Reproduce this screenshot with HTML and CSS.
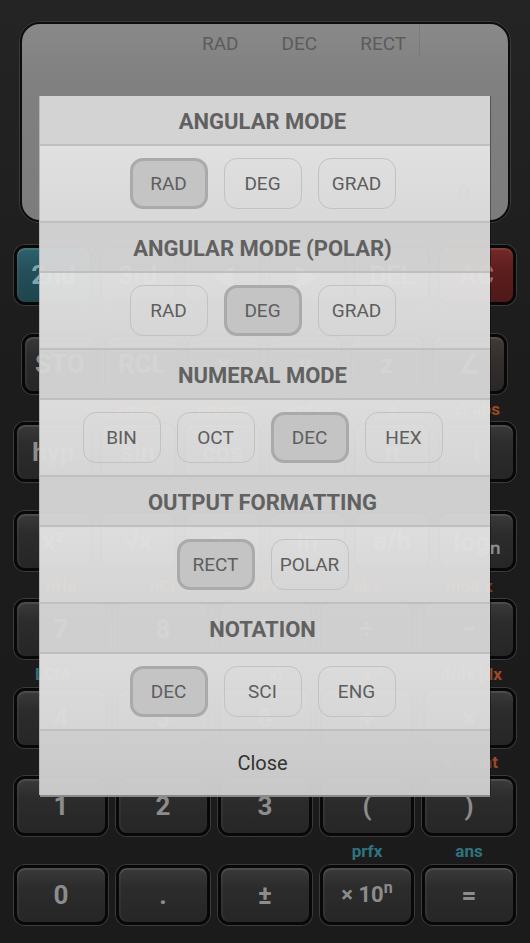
FILE: index.html
```html
<!DOCTYPE html>
<html>
<head>
<meta charset="utf-8">
<link rel="stylesheet" href="styles.css">
</head>
<body>
<div class="calc">
  <div class="display">
    <div class="status">
      <span>RAD</span><span>DEC</span><span>RECT</span><span class="sep"></span>
    </div>
    <div class="result">0</div>
  </div>
  <div class="keypad">
    <div class="row six">
      <div class="key teal">2nd</div><div class="key">3rd</div><div class="key">◀</div><div class="key">▶</div><div class="key">DEL</div><div class="key red">AC</div>
    </div>
    <div class="labels six"><span></span><span></span><span></span><span></span><span></span><span></span></div>
    <div class="row six narrow">
      <div class="key">STO</div><div class="key">RCL</div><div class="key">x</div><div class="key">y</div><div class="key">z</div><div class="key brown">∠</div>
    </div>
    <div class="labels six"><span></span><span class="or">arcsin</span><span class="or">arccos</span><span class="or">arctan</span><span class="or">e</span><span class="or">∠ abs</span></div>
    <div class="row six">
      <div class="key">hyp</div><div class="key">sin</div><div class="key">cos</div><div class="key">tan</div><div class="key">π</div><div class="key">i</div>
    </div>
    <div class="labels six"><span></span><span></span><span></span><span></span><span></span><span></span></div>
    <div class="row six">
      <div class="key">x²</div><div class="key">√x</div><div class="key">xⁿ</div><div class="key">ln</div><div class="key">a/b</div><div class="key">logₙ</div>
    </div>
    <div class="labels five"><span class="or">nHa</span><span class="or">nCr</span><span class="or">nPr</span><span class="or">abs</span><span class="or">mod x</span></div>
    <div class="row five">
      <div class="key">7</div><div class="key">8</div><div class="key">9</div><div class="key">÷</div><div class="key">−</div>
    </div>
    <div class="labels five"><span class="tl lft">LCM</span><span class="tl">GCD</span><span class="or">x!</span><span class="or">x⁻¹</span><span class="or">d/dx ∫dx</span></div>
    <div class="row five">
      <div class="key">4</div><div class="key">5</div><div class="key">6</div><div class="key">+</div><div class="key">×</div>
    </div>
    <div class="labels five"><span></span><span></span><span></span><span></span><span class="or">% → int</span></div>
    <div class="row five">
      <div class="key">1</div><div class="key">2</div><div class="key">3</div><div class="key">(</div><div class="key">)</div>
    </div>
    <div class="labels five"><span></span><span></span><span></span><span class="tl">prfx</span><span class="tl">ans</span></div>
    <div class="row five">
      <div class="key">0</div><div class="key">.</div><div class="key">±</div><div class="key small"><span>× 10<sup>n</sup></span></div><div class="key">=</div>
    </div>
  </div>
</div>

<div class="dialog">
  <div class="head">ANGULAR MODE</div>
  <div class="opts">
    <div class="btn on">RAD</div><div class="btn">DEG</div><div class="btn">GRAD</div>
  </div>
  <div class="head">ANGULAR MODE (POLAR)</div>
  <div class="opts">
    <div class="btn">RAD</div><div class="btn on">DEG</div><div class="btn">GRAD</div>
  </div>
  <div class="head">NUMERAL MODE</div>
  <div class="opts">
    <div class="btn">BIN</div><div class="btn">OCT</div><div class="btn on">DEC</div><div class="btn">HEX</div>
  </div>
  <div class="head">OUTPUT FORMATTING</div>
  <div class="opts">
    <div class="btn on">RECT</div><div class="btn">POLAR</div>
  </div>
  <div class="head">NOTATION</div>
  <div class="opts">
    <div class="btn on">DEC</div><div class="btn">SCI</div><div class="btn">ENG</div>
  </div>
  <div class="close">Close</div>
</div>
</body>
</html>
```

FILE: styles.css
```css
html, body {
  margin: 0;
  padding: 0;
}
body {
  width: 530px;
  height: 943px;
  overflow: hidden;
  background: #1e1e1e;
  font-family: Roboto, "Liberation Sans", sans-serif;
  position: relative;
}
.calc {
  display: flex;
  flex-direction: column;
  background: linear-gradient(#242424, #1c1c1c 40%, #1b1b1b);
  height: 943px;
}
.display {
  margin: 22px 20px 0 20px;
  height: 200px;
  box-sizing: border-box;
  border: 2px solid #0d0d0d;
  border-radius: 20px;
  box-shadow: 0 0 0 1px #3a3a3a;
  background: linear-gradient(#898989, #808080 30%, #7c7c7c);
  display: flex;
  flex-direction: column;
}
.status {
  display: flex;
  gap: 43px;
  padding: 10px 0 0 180px;
  font-size: 19px;
  line-height: 20px;
  color: #5c5c5c;
}
.status .sep {
  width: 0;
  height: 32px;
  margin-top: -10px;
  margin-left: -30px;
  border-left: 1px solid rgba(0, 0, 0, 0.08);
}
.result {
  margin-top: auto;
  align-self: flex-end;
  padding: 0 38px 14px 0;
  font-size: 22px;
  color: #333;
}
.keypad {
  display: flex;
  flex-direction: column;
  padding: 23px 14px 0 14px;
}
.row {
  display: flex;
  height: 60px;
}
.row.six { gap: 6px; }
.row.five { gap: 8px; }
.row.narrow { padding: 0 9px 0 8px; }
.labels {
  display: flex;
  height: 28.5px;
  align-items: center;
  font-size: 17px;
  font-weight: bold;
}
.labels.six { gap: 6px; }
.labels.five { gap: 8px; }
.labels span {
  flex: 1;
  text-align: center;
  white-space: nowrap;
  padding-top: 2px;
}
.labels .lft {
  text-align: left;
  padding-left: 21px;
}
.labels .or { color: #9a4a26; }
.labels .tl { color: #2f7380; }
.key {
  flex: 1;
  box-sizing: border-box;
  height: 60px;
  border: 3px solid #080808;
  border-radius: 11px;
  box-shadow: 0 0 0 1px #3b3b3b, inset 0 2px 1px rgba(255, 255, 255, 0.10), inset 2px 0 1px rgba(255, 255, 255, 0.05);
  background: linear-gradient(#3a3a3a, #2c2c2c 35%, #262626);
  display: flex;
  align-items: center;
  justify-content: center;
  font-size: 26px;
  font-weight: bold;
  color: #8c8c8c;
}
.key.teal {
  background: linear-gradient(#2f626b, #24505a 40%, #1e454d);
  color: #7fa4aa;
}
.key.red {
  background: linear-gradient(#742828, #5c1e1e 40%, #4f1919);
  color: #b07070;
}
.key.brown {
  background: linear-gradient(#433a39, #342e2d 40%, #2c2727);
}
.key.small {
  font-size: 22px;
}
.key sup {
  font-size: 16px;
  vertical-align: 9px;
  line-height: 0;
}

.dialog {
  position: absolute;
  left: 40px;
  top: 96px;
  width: 450px;
  display: flex;
  flex-direction: column;
  box-shadow: 1px 0 0 rgba(0, 0, 0, 0.35), -1px 0 0 #b5b5b5, 0 2px 0 #8a8a8a;
}
.head {
  box-sizing: border-box;
  height: 50px;
  padding: 2px 5px 0 0;
  background: rgba(214, 214, 214, 0.96);
  border-bottom: 2px solid rgba(190, 190, 190, 0.97);
  display: flex;
  align-items: center;
  justify-content: center;
  font-size: 22px;
  font-weight: bold;
  color: #616161;
}
.opts {
  box-sizing: border-box;
  height: 77px;
  padding: 0 5px 0 0;
  background: linear-gradient(rgba(228, 228, 228, 0.96), rgba(220, 220, 220, 0.96));
  border-bottom: 2px solid rgba(190, 190, 190, 0.97);
  display: flex;
  align-items: center;
  justify-content: center;
  gap: 16px;
}
.btn {
  box-sizing: border-box;
  width: 78px;
  height: 51px;
  border: 1.5px solid #c2c2c2;
  border-radius: 13px;
  display: flex;
  align-items: center;
  justify-content: center;
  font-size: 19px;
  color: #5e5e5e;
}
.btn.on {
  background: #c4c4c4;
  border: 3px solid #aaaaaa;
}
.close {
  box-sizing: border-box;
  height: 64px;
  padding: 0 5px 0 0;
  background: linear-gradient(rgba(212, 212, 212, 0.97), rgba(205, 205, 205, 0.97));
  display: flex;
  align-items: center;
  justify-content: center;
  font-size: 20px;
  color: #333;
}
```
